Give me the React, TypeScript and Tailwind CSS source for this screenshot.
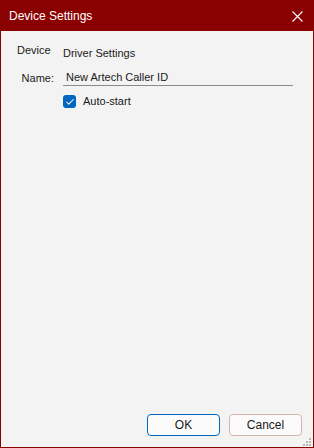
import { Check } from 'lucide-react'

function ResizeGrip() {
  // dotted triangle in the bottom-right corner
  const dots = [
    [6, 0],
    [3, 3],
    [6, 3],
    [0, 6],
    [3, 6],
    [6, 6],
  ]
  return (
    <svg width="8" height="8" viewBox="0 0 8 8" className="absolute right-[2px] bottom-[1px]">
      {dots.map(([x, y], i) => (
        <rect key={i} x={x} y={y} width="2" height="2" fill="#b8b8b8" />
      ))}
    </svg>
  )
}

export default function App() {
  return (
    <div className="w-[314px] h-[448px] flex flex-col border border-[#8b0000] font-['Liberation_Sans',sans-serif] text-[#1a1a1a] select-none">
      {/* Title bar */}
      <div className="h-[30px] bg-[#8b0000] flex items-center justify-between pl-[8px] pr-[10px] shrink-0">
        <span className="text-white text-[12px]">Device Settings</span>
        <svg width="11" height="11" viewBox="0 0 11 11">
          <path d="M0.5 0.5 L10.5 10.5 M10.5 0.5 L0.5 10.5" stroke="white" strokeWidth="1.1" />
        </svg>
      </div>

      {/* Body */}
      <div className="relative flex-1 flex flex-col bg-[#f3f3f3] text-[11px]">
        <div className="flex flex-col pt-[14px]">
          <div className="flex items-end h-[14px]">
            <span className="pl-[16px] w-[62px] relative -top-[1px]">Device</span>
            <span className="relative top-[2px]">Driver Settings</span>
          </div>

          <div className="flex items-center mt-[11px] h-[16px]">
            <span className="w-[62px] text-right pr-[9px]">Name:</span>
            <div className="w-[230px] h-[16px] border-b border-[#8a8a8a] pl-[3px] leading-[15px]">
              New Artech Caller ID
            </div>
          </div>

          <label className="flex items-center gap-[7px] mt-[8px] pl-[62px] h-[15px]">
            <span className="w-[13px] h-[13px] rounded-[3px] bg-[#0067c0] flex items-center justify-center">
              <Check size={10} strokeWidth={2.5} className="text-white" />
            </span>
            <span>Auto-start</span>
          </label>
        </div>

        <div className="flex-1" />

        {/* Buttons */}
        <div className="flex justify-end gap-[9px] pr-[11px] pb-[11px]">
          <button className="w-[73px] h-[22px] rounded-[4px] border border-[#0067c0] bg-[#fbfbfb] text-[12px] text-[#1a1a1a]">
            OK
          </button>
          <button className="w-[73px] h-[22px] rounded-[4px] border border-[#d4b4ac] bg-[#fbfbfb] text-[12px] text-[#1a1a1a]">
            Cancel
          </button>
        </div>

        <ResizeGrip />
      </div>
    </div>
  )
}
